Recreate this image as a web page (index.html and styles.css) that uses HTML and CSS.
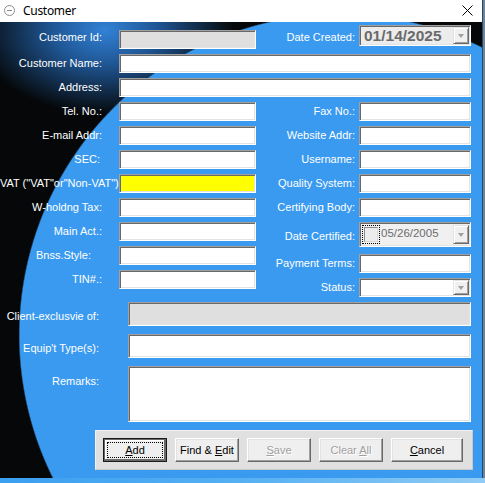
FILE: index.html
```html
<!DOCTYPE html>
<html>
<head>
<meta charset="utf-8">
<title>Customer</title>
<link rel="stylesheet" href="styles.css">
</head>
<body>
<div class="screen">
  <div class="window">
    <div class="titlebar">
      <svg class="ticon" width="11" height="11" viewBox="0 0 11 11"><circle cx="5.5" cy="5.5" r="5" fill="none" stroke="#8c8c8c" stroke-width="1"/><line x1="3" y1="5.5" x2="8" y2="5.5" stroke="#8c8c8c" stroke-width="1"/></svg>
      <span class="title">Customer</span>
      <svg class="close" width="11" height="11" viewBox="0 0 11 11"><path d="M0.5 0.5L10.5 10.5M10.5 0.5L0.5 10.5" stroke="#000" stroke-width="1" fill="none"/></svg>
    </div>
    <div class="client">
      <div class="form">
        <div class="row-head">
          <span class="lbl lbl-left">Customer Id:</span>
          <span class="field field-off field-id"></span>
          <span class="lbl lbl-right">Date Created:</span>
          <span class="combo combo-created"><span class="date-big">01/14/2025</span><span class="drop"><i></i></span></span>
        </div>
        <div class="row row-wide">
          <span class="lbl lbl-left">Customer Name:</span>
          <span class="field"></span>
        </div>
        <div class="row row-wide">
          <span class="lbl lbl-left">Address:</span>
          <span class="field"></span>
        </div>
        <div class="split">
          <div class="col col-left">
            <div class="row row-left"><span class="lbl lbl-left">Tel. No.:</span><span class="field"></span></div>
            <div class="row row-left"><span class="lbl lbl-left">E-mail Addr:</span><span class="field"></span></div>
            <div class="row row-left"><span class="lbl lbl-left lbl-sec">SEC:</span><span class="field"></span></div>
            <div class="row row-left"><span class="lbl lbl-left lbl-vat">VAT ("VAT"or"Non-VAT")</span><span class="field field-yellow"></span></div>
            <div class="row row-left"><span class="lbl lbl-left">W-holdng Tax:</span><span class="field"></span></div>
            <div class="row row-left"><span class="lbl lbl-left">Main Act.:</span><span class="field"></span></div>
            <div class="row row-left"><span class="lbl lbl-left lbl-bnss">Bnss.Style:</span><span class="field"></span></div>
            <div class="row row-left"><span class="lbl lbl-left">TIN#.:</span><span class="field"></span></div>
          </div>
          <div class="col col-right">
            <div class="row row-right"><span class="lbl lbl-right">Fax No.:</span><span class="field"></span></div>
            <div class="row row-right"><span class="lbl lbl-right">Website Addr:</span><span class="field"></span></div>
            <div class="row row-right"><span class="lbl lbl-right">Username:</span><span class="field"></span></div>
            <div class="row row-right"><span class="lbl lbl-right">Quality System:</span><span class="field"></span></div>
            <div class="row row-right"><span class="lbl lbl-right">Certifying Body:</span><span class="field"></span></div>
            <div class="row row-right row-cert">
              <span class="lbl lbl-right lbl-bottom">Date Certified:</span>
              <span class="combo combo-cert">
                <span class="chk-focus"><span class="chk"></span></span>
                <span class="date-small">05/26/2005</span>
                <span class="drop"><i></i></span>
              </span>
            </div>
            <div class="row row-right row-pay"><span class="lbl lbl-right">Payment Terms:</span><span class="field"></span></div>
            <div class="row row-right"><span class="lbl lbl-right">Status:</span><span class="combo combo-status"><span class="drop"><i></i></span></span></div>
          </div>
        </div>
        <div class="lower">
          <div class="lrow"><span class="lbl lbl-low">Client-exclusvie of:</span><span class="field field-off"></span></div>
          <div class="lrow"><span class="lbl lbl-low">Equip't Type(s):</span><span class="field"></span></div>
          <div class="lrow lrow-remarks"><span class="lbl lbl-low lbl-top">Remarks:</span><span class="field"></span></div>
          <div class="btnbar">
            <span class="btn btn-default"><span class="btn-text"><u>A</u>dd</span></span>
            <span class="btn"><span class="btn-text">Find &amp; <u>E</u>dit</span></span>
            <span class="btn btn-off"><span class="btn-text"><u>S</u>ave</span></span>
            <span class="btn btn-off"><span class="btn-text">Clear <u>A</u>ll</span></span>
            <span class="btn btn-wide"><span class="btn-text"><u>C</u>ancel</span></span>
          </div>
        </div>
      </div>
    </div>
  </div>
  <div class="taskbar"></div>
</div>
</body>
</html>
```

FILE: styles.css
```css
* { box-sizing: border-box; }
html, body { margin: 0; padding: 0; }
body {
  width: 485px;
  height: 483px;
  overflow: hidden;
  background: #6f8597;
  font-family: "Liberation Sans", Arial, sans-serif;
  font-size: 11px;
}
.screen { display: flex; flex-direction: column; height: 483px; }
.window {
  width: 483px;
  height: 478px;
  border-right: 1px solid #1d4a70;
  display: flex;
  flex-direction: column;
}
.taskbar {
  height: 5px;
  background: linear-gradient(90deg, #3b9ff0 0%, #55b0f3 50%, #8fcbf5 100%);
}
.titlebar {
  height: 22px;
  background: #fff;
  display: flex;
  align-items: center;
  padding-left: 4px;
  padding-bottom: 2px;
}
.ticon { margin-right: 8px; margin-top: 1px; }
.title {
  font-family: "Noto Sans", "Open Sans", sans-serif;
  font-size: 12px;
  letter-spacing: -0.3px;
  color: #000;
}
.close { margin-left: auto; margin-right: 9px; margin-top: 1px; }

.client {
  flex: 1;
  padding: 3px 11px 0 0;
  background:
    radial-gradient(circle at 340px 313px, #3a9af0 320px, rgba(58,154,240,0) 321.5px),
    radial-gradient(ellipse 130px 85px at 105px 8px, #3282d6 0%, rgba(38,106,184,0.8) 40%, rgba(10,30,60,0) 100%),
    #050708;
}
.form { display: flex; flex-direction: column; gap: 5px; }

.lbl {
  color: #fff;
  font-size: 11px;
  line-height: 13px;
  text-align: right;
  white-space: nowrap;
}
.lbl-left { padding-right: 17px; }
.lbl-right { padding-right: 4px; }
.lbl-vat { padding-right: 4px; }
.lbl-bnss { padding-right: 28px; }
.lbl-sec { padding-right: 19px; }
.lbl-bottom { align-self: end; margin-bottom: 4px; }

.field {
  display: block;
  height: 100%;
  background: #fff;
  border: 1px solid;
  border-color: #a0a0a0 #fff #fff #a0a0a0;
  box-shadow: inset 1px 1px #696969, inset -1px -1px #e3e3e3;
}
.field-off { background: #dfdfdf; }
.field-yellow { background: #ffff00; }

.row-head {
  display: grid;
  grid-template-columns: 119px 137px 103px 112px;
  height: 24px;
  align-items: center;
}
.field-id { align-self: end; height: 19px; }
.row {
  display: grid;
  height: 19px;
  align-items: center;
}
.row-wide { grid-template-columns: 119px 352px; }
.row-left { grid-template-columns: 119px 137px; }
.row-right { grid-template-columns: 103px 112px; }

.split { display: flex; }
.col { display: flex; flex-direction: column; gap: 5px; }
.col-left { width: 256px; }
.col-right { width: 215px; }
.row-cert { height: 25px; }
.row-pay { margin-top: 2px; }

.combo {
  display: flex;
  height: 100%;
  border: 1px solid;
  border-color: #a0a0a0 #fff #fff #a0a0a0;
  box-shadow: inset 1px 1px #696969, inset -1px -1px #e3e3e3;
}
.combo-created {
  align-self: start;
  height: 21px;
  background: #ececec;
  padding: 1px 1px 1px 4px;
  align-items: center;
}
.date-big {
  font-weight: bold;
  font-size: 15.5px;
  color: #6a6a6a;
  line-height: 17px;
}
.combo-cert {
  background: #f0f0f0;
  padding: 2px 1px 2px 2px;
  align-items: flex-start;
}
.chk-focus {
  width: 18px;
  height: 19px;
  border: 1px dotted #000;
  display: flex;
  align-items: center;
  justify-content: center;
}
.chk {
  width: 14px;
  height: 15px;
  background: #ececec;
  border: 1px solid;
  border-color: #8c8c8c #d8d8d8 #d8d8d8 #8c8c8c;
}
.date-small {
  margin-left: 1px;
  margin-top: 2px;
  font-size: 11.5px;
  line-height: 13px;
  color: #6d6d6d;
}
.combo-status {
  background: #fff;
  padding: 1px 1px 1px 1px;
}
.drop {
  margin-left: auto;
  width: 16px;
  align-self: stretch;
  background: #f0f0f0;
  border: 1px solid;
  border-color: #e3e3e3 #696969 #696969 #e3e3e3;
  box-shadow: inset 1px 1px #fff, inset -1px -1px #a0a0a0;
  display: flex;
  align-items: center;
  justify-content: center;
}
.drop i {
  display: block;
  width: 0;
  height: 0;
  border-left: 3.5px solid transparent;
  border-right: 3.5px solid transparent;
  border-top: 4px solid #a0a0a0;
}

.lower { display: flex; flex-direction: column; gap: 8px; }
.lrow {
  display: grid;
  grid-template-columns: 128px 343px;
  height: 24px;
  align-items: center;
}
.lrow-remarks { height: 56px; }
.lbl-low { padding-right: 29px; padding-top: 4px; }
.lbl-top { align-self: start; padding-top: 9px; }

.btnbar {
  margin-left: 95px;
  width: 378px;
  height: 40px;
  background: #e0e0e0;
  border: 1px solid #f2f2f2;
  border-right-color: #c8c8c8;
  border-bottom-color: #c8c8c8;
  padding: 7px;
  display: flex;
  gap: 8px;
}
.btn {
  position: relative;
  width: 64px;
  height: 24px;
  background: #efefef;
  border: 1px solid;
  border-color: #fff #696969 #696969 #fff;
  box-shadow: inset -1px -1px #a0a0a0, inset 1px 1px #e3e3e3;
  display: flex;
  align-items: center;
  justify-content: center;
  color: #000;
  font-size: 11px;
}
.btn-text { white-space: pre; }
.btn-wide { width: 72px; }
.btn-default {
  border: 1px solid #1a1a1a;
  box-shadow: inset 1px 1px #696969, inset -2px -2px #696969, inset 2px 2px #fff;
}
.btn-default::after {
  content: "";
  position: absolute;
  left: 3px;
  top: 3px;
  right: 3px;
  bottom: 3px;
  border: 1px dotted #000;
}
.btn-off {
  color: #a0a0a0;
  text-shadow: 1px 1px 0 #fff;
}
```
